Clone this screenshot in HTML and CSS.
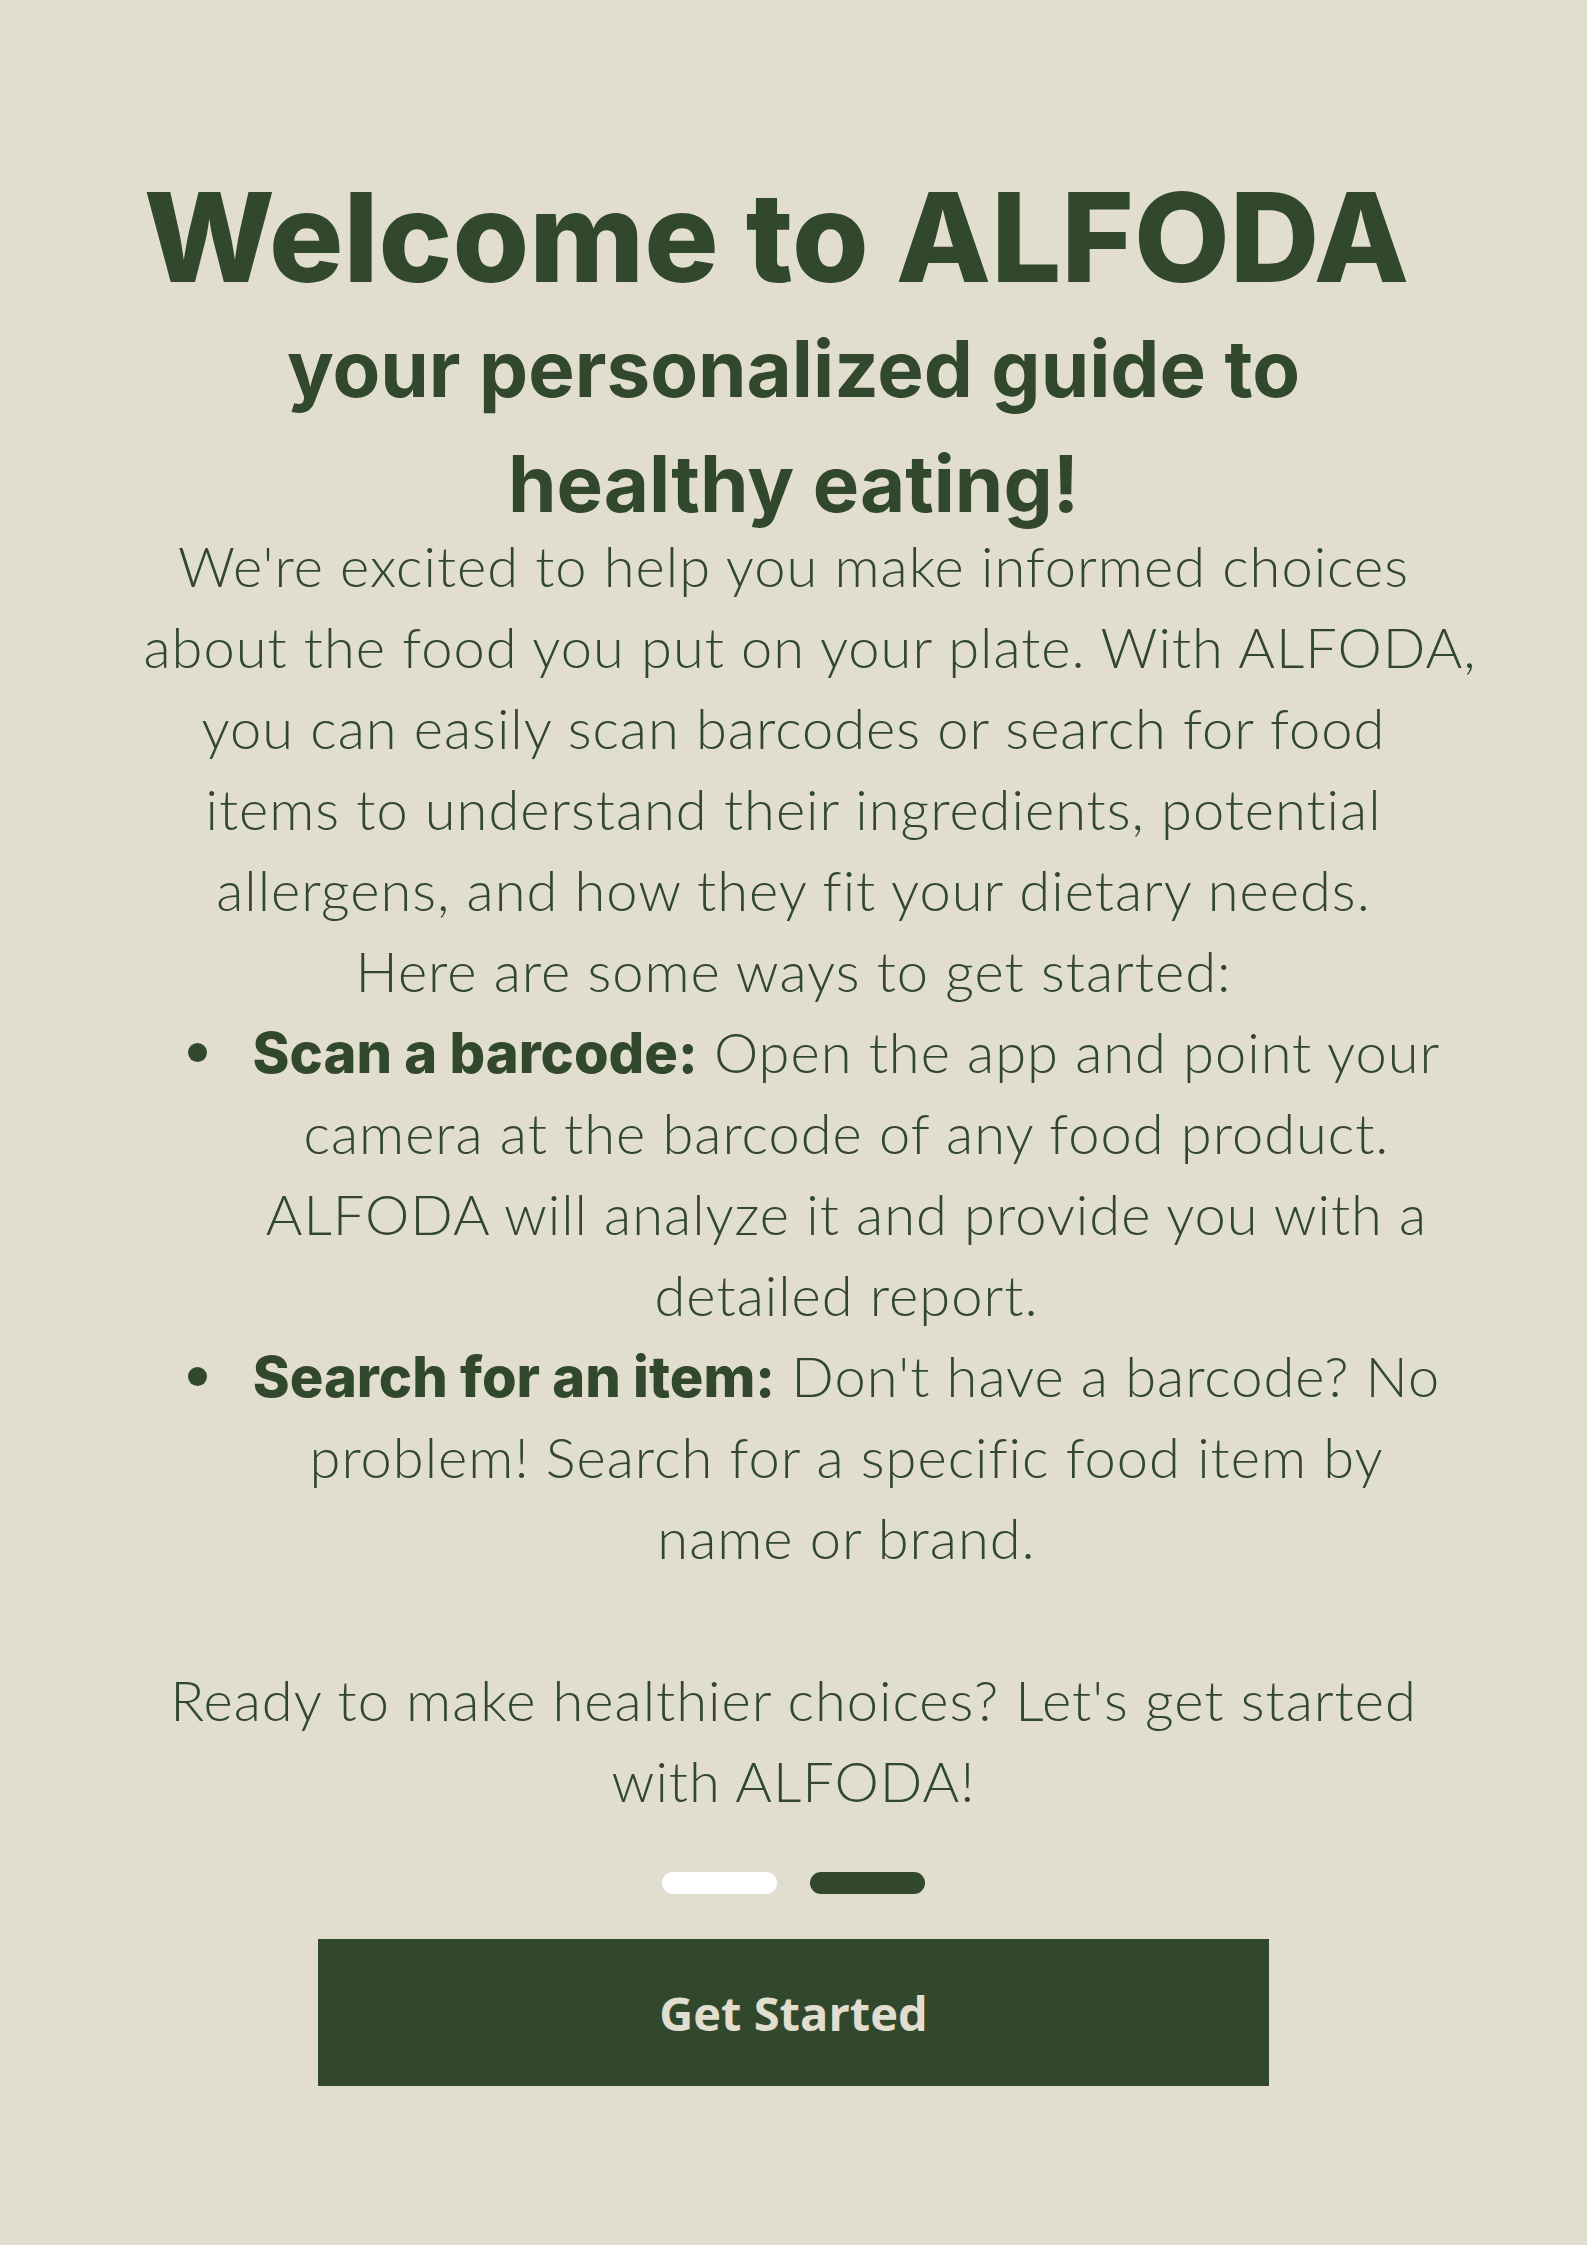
FILE: index.html
```html
<!DOCTYPE html>
<html lang="en">
<head>
<meta charset="utf-8">
<title>Welcome to ALFODA</title>
<link rel="stylesheet" href="styles.css">
</head>
<body>
<main class="screen">
  <h1 class="title">Welcome to ALFODA</h1>
  <h2 class="subtitle">your personalized guide to<br>healthy eating!</h2>
  <div class="copy">
    <p class="intro">We're excited to help you make informed choices<br>about the food you put on your plate. With ALFODA,<br>you can easily scan barcodes or search for food<br>items to understand their ingredients, potential<br>allergens, and how they fit your dietary needs.<br>Here are some ways to get started:</p>
    <ul class="ways">
      <li><strong>Scan a barcode:</strong> Open the app and point your<br>camera at the barcode of any food product.<br>ALFODA will analyze it and provide you with a<br>detailed report.</li>
      <li><strong>Search for an item:</strong> Don't have a barcode? No<br>problem! Search for a specific food item by<br>name or brand.</li>
    </ul>
    <p class="outro">Ready to make healthier choices? Let's get started<br>with ALFODA!</p>
  </div>
  <div class="dots">
    <span class="dot dot-light"></span>
    <span class="dot dot-dark"></span>
  </div>
  <button class="cta" type="button">Get Started</button>
</main>
</body>
</html>
```
FILE: styles.css
```css
html, body {
  margin: 0;
  padding: 0;
  background: #e2decf;
}

.screen {
  width: 1587px;
  min-height: 2245px;
  box-sizing: border-box;
  padding-top: 163px;
  display: flex;
  flex-direction: column;
  align-items: center;
  color: #32482c;
}

.title {
  margin: 0;
  font-family: "Inter", sans-serif;
  font-weight: 800;
  font-size: 124px;
  line-height: 149px;
  letter-spacing: 0;
  text-align: center;
  white-space: nowrap;
  padding-right: 34px;
}

.subtitle {
  margin: -1px 0 0;
  font-family: "Inter", sans-serif;
  font-weight: 700;
  font-size: 78px;
  line-height: 115px;
  text-align: center;
  white-space: nowrap;
}

.copy {
  width: 1300px;
  margin-top: -16px;
  font-family: "Lato", sans-serif;
  font-weight: 300;
  font-size: 56px;
  line-height: 81px;
  letter-spacing: 1px;
  text-align: center;
}

.intro, .outro {
  margin: 0;
  white-space: nowrap;
}

.outro {
  margin-top: 81px;
}

.ways {
  margin: 0;
  padding: 0 0 0 106px;
  list-style: none;
}

.ways li {
  position: relative;
  white-space: nowrap;
}

.ways li::before {
  content: "";
  position: absolute;
  left: -62px;
  top: 32px;
  width: 19px;
  height: 19px;
  border-radius: 50%;
  background: #32482c;
}

.ways strong {
  font-family: "Inter", sans-serif;
  font-weight: 800;
  letter-spacing: 0;
  line-height: 1;
}

.dots {
  display: flex;
  gap: 33px;
  margin-top: 51px;
}

.dot {
  display: block;
  width: 115px;
  height: 22px;
  border-radius: 11px;
}

.dot-light { background: #ffffff; }
.dot-dark { background: #32482c; }

.cta {
  margin-top: 45px;
  width: 951px;
  height: 147px;
  border: 0;
  border-radius: 0;
  background: #32482c;
  color: #e2decf;
  font-family: "Open Sans", sans-serif;
  font-weight: 700;
  font-size: 47px;
  padding: 0;
  display: flex;
  align-items: center;
  justify-content: center;
  cursor: pointer;
}
```
